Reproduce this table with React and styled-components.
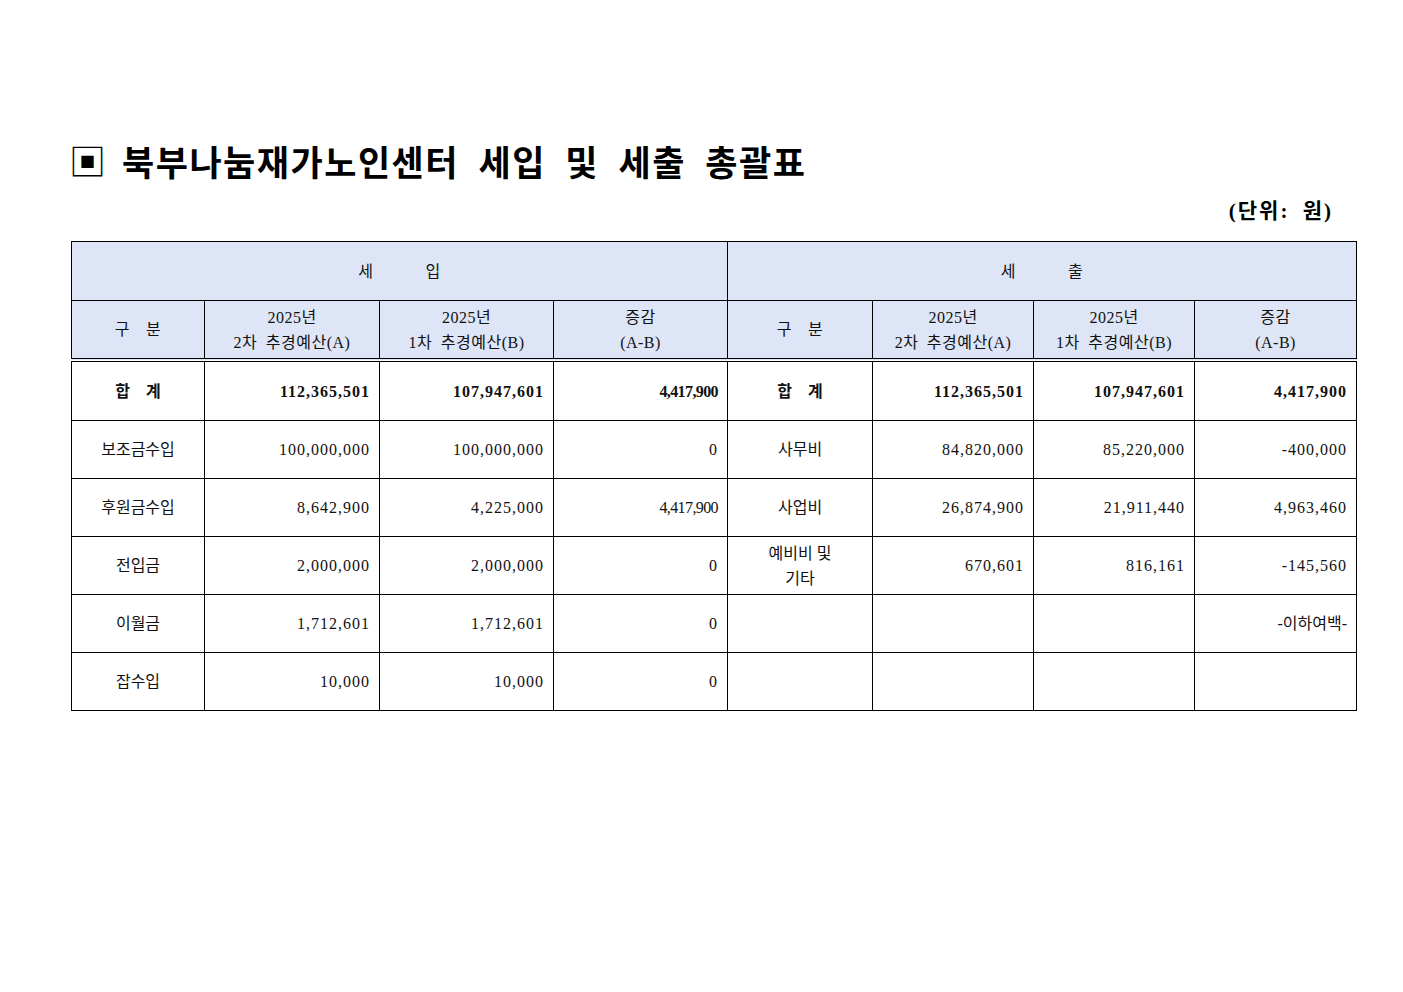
import React from 'react';
import styled, { createGlobalStyle } from 'styled-components';

const GlobalStyle = createGlobalStyle`
  html, body {
    margin: 0;
    padding: 0;
    background: #ffffff;
  }
  body {
    font-family: "Liberation Serif", "Noto Sans CJK KR", serif;
    color: #000;
  }
`;

const Page = styled.div`
  width: 1403px;
  min-height: 992px;
  padding: 138px 0 0 71px;
  box-sizing: border-box;
`;

const Title = styled.h1`
  display: flex;
  align-items: center;
  margin: 0;
  height: 44px;
  font-family: "Noto Sans CJK KR", sans-serif;
  font-weight: 700;
  font-size: 35px;
  letter-spacing: 1.5px;
  word-spacing: 10px;
  white-space: nowrap;
`;

const Mark = styled.span`
  font-weight: 400;
  font-size: 37px;
  margin-right: 16px;
  margin-left: -2px;
  letter-spacing: 0;
`;

const Unit = styled.div`
  width: 1262px;
  text-align: right;
  margin-top: 15px;
  font-family: "Liberation Serif", "Noto Sans CJK KR", serif;
  font-weight: 700;
  font-size: 21px;
  line-height: 28px;
  letter-spacing: 2px;
  word-spacing: 6px;
`;

const Table = styled.table`
  margin-top: 16px;
  border-collapse: collapse;
  table-layout: fixed;
  width: 1285px;
  font-size: 16px;
`;

const Cell = styled.td`
  border: 1.5px solid #000;
  height: ${p => p.$h || 57}px;
  padding: 0 ${p => p.$right ? 9 : 4}px 0 4px;
  text-align: ${p => p.$right ? 'right' : 'center'};
  vertical-align: middle;
  font-weight: ${p => p.$bold ? 700 : 400};
  line-height: 25px;
  color: #111;
`;

const Head = styled(Cell).attrs({ as: 'th' })`
  background: #dde5f6;
  font-weight: 400;
  letter-spacing: 0.5px;
  word-spacing: 4px;
  border-bottom: ${p => p.$double ? '4.5px double #000' : '1.5px solid #000'};
`;

const Spread = styled.span`
  display: inline-flex;
  gap: ${p => p.$gap}px;
`;

const Nums = styled.span`
  font-family: "Liberation Serif", serif;
  font-size: 16px;
  letter-spacing: ${p => (p.$tight ? '-0.6px' : '1px')};
`;

const widths = [133, 175, 174, 174, 145, 161, 161, 162];

const rows = [
  ['보조금수입', '100,000,000', '100,000,000', '0', '사무비', '84,820,000', '85,220,000', '-400,000'],
  ['후원금수입', '8,642,900', '4,225,000', '4,417,900', '사업비', '26,874,900', '21,911,440', '4,963,460'],
  ['전입금', '2,000,000', '2,000,000', '0', 'multi', '670,601', '816,161', '-145,560'],
  ['이월금', '1,712,601', '1,712,601', '0', '', '', '', '-이하여백-'],
  ['잡수입', '10,000', '10,000', '0', '', '', '', ''],
];

const colHead = (key) => [
  <Head key={key + 'a'} $double><Spread $gap={16}><span>구</span><span>분</span></Spread></Head>,
  <Head key={key + 'b'} $double>2025년<br />2차 추경예산(A)</Head>,
  <Head key={key + 'c'} $double>2025년<br />1차 추경예산(B)</Head>,
  <Head key={key + 'd'} $double>증감<br />(A-B)</Head>,
];

function NumCell({ value, tight, bold }) {
  return (
    <Cell $right $bold={bold}>
      <Nums $tight={tight}>{value}</Nums>
    </Cell>
  );
}

export default function App() {
  return (
    <Page>
      <GlobalStyle />
      <Title><Mark>▣</Mark>북부나눔재가노인센터 세입 및 세출 총괄표</Title>
      <Unit>(단위: 원)</Unit>
      <Table>
        <colgroup>
          {widths.map((w, i) => <col key={i} style={{ width: w }} />)}
        </colgroup>
        <thead>
          <tr>
            <Head colSpan={4} $h={58}><Spread $gap={52}><span>세</span><span>입</span></Spread></Head>
            <Head colSpan={4} $h={58}><Spread $gap={52}><span>세</span><span>출</span></Spread></Head>
          </tr>
          <tr>
            {colHead('l')}
            {colHead('r')}
          </tr>
        </thead>
        <tbody>
          <tr>
            <Cell $bold $h={58}><Spread $gap={16}><span>합</span><span>계</span></Spread></Cell>
            <NumCell bold value="112,365,501" />
            <NumCell bold value="107,947,601" />
            <NumCell bold tight value="4,417,900" />
            <Cell $bold><Spread $gap={16}><span>합</span><span>계</span></Spread></Cell>
            <NumCell bold value="112,365,501" />
            <NumCell bold value="107,947,601" />
            <NumCell bold value="4,417,900" />
          </tr>
          {rows.map((r, i) => (
            <tr key={i}>
              <Cell>{r[0]}</Cell>
              <NumCell value={r[1]} />
              <NumCell value={r[2]} />
              <NumCell value={r[3]} tight={r[3] === '4,417,900'} />
              <Cell>{r[4] === 'multi' ? <>예비비 및<br />기타</> : r[4]}</Cell>
              <NumCell value={r[5]} />
              <NumCell value={r[6]} />
              {r[7] === '-이하여백-'
                ? <Cell $right>{r[7]}</Cell>
                : <NumCell value={r[7]} />}
            </tr>
          ))}
        </tbody>
      </Table>
    </Page>
  );
}
